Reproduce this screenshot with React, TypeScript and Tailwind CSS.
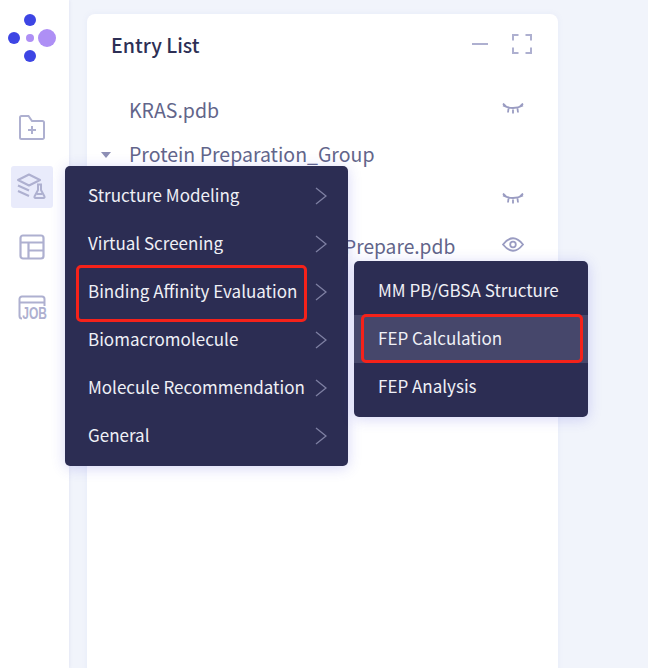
const font = "font-['Noto_Sans_CJK_SC','Noto_Sans',sans-serif]";

const mainMenu = [
  "Structure Modeling",
  "Virtual Screening",
  "Binding Affinity Evaluation",
  "Biomacromolecule",
  "Molecule Recommendation",
  "General",
];

const subMenu = ["MM PB/GBSA Structure", "FEP Calculation", "FEP Analysis"];

function Logo() {
  return (
    <svg width="48" height="48" viewBox="0 0 48 48">
      <circle cx="22" cy="6" r="6" fill="#3d45e4" />
      <circle cx="6" cy="24" r="6" fill="#3d45e4" />
      <circle cx="22" cy="24" r="4" fill="#ae8ff5" />
      <circle cx="39" cy="24" r="9" fill="#ae8ff5" />
      <circle cx="22" cy="42" r="6" fill="#3d45e4" />
    </svg>
  );
}

function FolderPlus() {
  return (
    <svg width="26" height="25" viewBox="0 0 26 25" fill="none" stroke="#aeb0d0" strokeWidth="2">
      <path d="M1 2.500A1.500 1.500 0 0 1 2.500 1h7l3.500 5h10.500A1.500 1.500 0 0 1 25 7.500v15a1.500 1.500 0 0 1-1.500 1.500h-21A1.500 1.500 0 0 1 1 22.500z" />
      <path d="M13 11v8M9 15h8" />
    </svg>
  );
}

function LayersFlask() {
  return (
    <svg width="30" height="28" viewBox="0 0 30 28" fill="none" stroke="#aeb0d0" strokeWidth="2">
      <path d="M1 7 12 1.500 23 7 12 12.500z" strokeLinejoin="round" />
      <path d="M1 12.500 12 17.500M1 18 12 23" />
      <path d="M20 11.500h5M21 11.500v5.500l-3.500 6.500a1 1 0 0 0 1 1.500h8a1 1 0 0 0 1-1.500L24 17v-5.500" strokeLinejoin="round" />
      <path d="M19.500 21h6" />
    </svg>
  );
}

function Layout() {
  return (
    <svg width="26" height="26" viewBox="0 0 26 26" fill="none" stroke="#aeb0d0" strokeWidth="2.200">
      <rect x="1.500" y="1.500" width="23" height="23" rx="2.500" />
      <path d="M1.500 8.500h23M9.500 8.500v16M9.500 16.500h15" />
    </svg>
  );
}

function Job() {
  return (
    <div className="relative h-[25px] w-[29px]">
      <svg width="29" height="25" viewBox="0 0 29 25" fill="none" stroke="#aeb0d0" strokeWidth="2">
        <path d="M1.500 21V4A2.500 2.500 0 0 1 4 1.500h20A2.500 2.500 0 0 1 26.500 4v7M1.500 7.500h25M1.500 21q0 2.500 2.500 2.500" />
      </svg>
      <span className="absolute right-0 bottom-[-2px] origin-right scale-x-[0.75] bg-white font-['Liberation_Sans',sans-serif] text-[16px] leading-[16px] font-bold text-[#aeb0d0]">
        JOB
      </span>
    </div>
  );
}

function EyeClosed() {
  return (
    <svg width="22" height="11" viewBox="0 0 22 11" fill="none" stroke="#9a9cc2" strokeWidth="1.800">
      <path d="M1 2.500q10 5 20 0M1 .5l3 3M21 .5l-3 3M6.500 5.500 6 9.500M15.500 5.500l.5 4M11 6.500v4" />
    </svg>
  );
}

function EyeOpen() {
  return (
    <svg width="22" height="15" viewBox="0 0 22 15" fill="none" stroke="#9a9cc2" strokeWidth="1.800">
      <path d="M1 7.500q10-12.500 20 0q-10 12.500-20 0z" />
      <circle cx="11" cy="7.500" r="2.800" />
    </svg>
  );
}

function Chevron() {
  return (
    <svg width="12" height="18" viewBox="0 0 12 18" fill="none" stroke="#7f80a3" strokeWidth="1.300">
      <path d="M1 1l10 8-10 8" />
    </svg>
  );
}

export default function App() {
  return (
    <div className={`relative flex h-[668px] w-[648px] overflow-hidden bg-[#f1f4fb] ${font}`}>
      {/* Sidebar */}
      <aside className="flex w-[69px] flex-col items-start bg-white pl-[11px] shadow-[1px_0_3px_rgba(90,90,160,0.08)]">
        <div className="mt-[14px] -ml-[3px]">
          <Logo />
        </div>
        <div className="mt-[44px] flex flex-col gap-[18px]">
          <div className="flex h-[42px] w-[42px] items-center justify-center">
            <FolderPlus />
          </div>
          <div className="flex h-[42px] w-[42px] items-center justify-center rounded-[3px] bg-[#e9ebfb]">
            <LayersFlask />
          </div>
          <div className="flex h-[42px] w-[42px] items-center justify-center">
            <Layout />
          </div>
          <div className="flex h-[42px] w-[42px] items-center justify-center">
            <Job />
          </div>
        </div>
      </aside>

      {/* Entry list card */}
      <main className="mt-[14px] ml-[18px] h-[700px] w-[471px] rounded-t-[8px] bg-white shadow-[0_0_6px_rgba(120,130,200,0.08)]">
        <div className="flex items-center justify-between pt-[17px] pr-[26px] pl-[24px]">
          <h1 className="text-[19.6px] leading-[28px] font-medium text-[#2d2f55]">Entry List</h1>
          <div className="mb-[3px] flex items-center gap-[24px]">
            <div className="h-[2px] w-[16px] bg-[#aeb0d0]" />
            <svg width="20" height="20" viewBox="0 0 20 20" fill="none" stroke="#aeb0d0" strokeWidth="2">
              <path d="M6.500 1H1v5.500M13.500 1H19v5.500M6.500 19H1v-5.500M13.500 19H19v-5.500" />
            </svg>
          </div>
        </div>

        <div className="mt-[28px] flex flex-col text-[19.5px] text-[#62658a]">
          <div className="flex h-[45.5px] items-center justify-between pr-[34px] pl-[42px]">
            <span>KRAS.pdb</span>
            <div className="mb-[2px]">
              <EyeClosed />
            </div>
          </div>
          <div className="flex h-[45.5px] items-center pl-[14px]">
            <span className="mr-[18px] h-0 w-0 border-x-[5px] border-t-[6px] border-x-transparent border-t-[#8d8fb5]" />
            <span className="pb-[3px] leading-[24px]">Protein Preparation_Group</span>
          </div>
          <div className="flex h-[45.5px] items-center justify-end pr-[34px]">
            <div className="mb-[5px]">
              <EyeClosed />
            </div>
          </div>
          <div className="flex h-[45.5px] items-center justify-between pr-[34px] pl-[257px]">
            <span className="text-[19.2px]">Prepare.pdb</span>
            <div className="mb-[4px]">
              <EyeOpen />
            </div>
          </div>
        </div>
      </main>

      {/* Main menu */}
      <div className="absolute top-[166px] left-[65px] w-[283px] rounded-[5px] bg-[#2c2d53] py-[6px] shadow-[0_2px_14px_rgba(70,70,220,0.22)]">
        {mainMenu.map((label) => (
          <div key={label} className="flex h-[48px] items-center justify-between pr-[21px] pl-[23px]">
            <span className="pb-[2px] text-[17px] whitespace-nowrap text-[#eff0f6]">{label}</span>
            <Chevron />
          </div>
        ))}
      </div>

      {/* Sub menu */}
      <div className="absolute top-[261px] left-[354px] w-[234px] rounded-[5px] bg-[#2c2d53] py-[6px] shadow-[0_2px_14px_rgba(70,70,220,0.22)]">
        {subMenu.map((label) => (
          <div
            key={label}
            className={`flex h-[48px] items-center pl-[24px] ${label === "FEP Calculation" ? "bg-[#46476b]" : ""}`}
          >
            <span className="pb-[2px] text-[17px] whitespace-nowrap text-[#eff0f6]">{label}</span>
          </div>
        ))}
      </div>

      {/* Red annotation boxes */}
      <div className="absolute top-[265px] left-[76px] h-[57px] w-[231px] rounded-[5px] border-[3px] border-[#f5221a]" />
      <div className="absolute top-[314px] left-[361px] h-[49px] w-[222px] rounded-[5px] border-[3px] border-[#f5221a]" />
    </div>
  );
}
